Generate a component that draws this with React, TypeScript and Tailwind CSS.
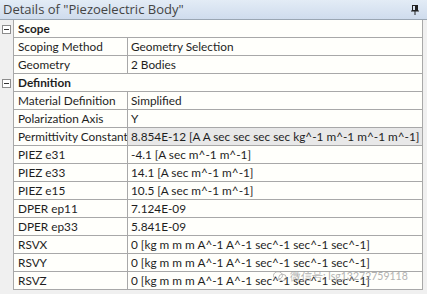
import React from 'react';

type Row =
  | { kind: 'group'; label: string }
  | { kind: 'item'; label: string; value: string; highlight?: boolean };

const rows: Row[] = [
  { kind: 'group', label: 'Scope' },
  { kind: 'item', label: 'Scoping Method', value: 'Geometry Selection' },
  { kind: 'item', label: 'Geometry', value: '2 Bodies' },
  { kind: 'group', label: 'Definition' },
  { kind: 'item', label: 'Material Definition', value: 'Simplified' },
  { kind: 'item', label: 'Polarization Axis', value: 'Y' },
  {
    kind: 'item',
    label: 'Permittivity Constant',
    value: '8.854E-12 [A A sec sec sec sec kg^-1 m^-1 m^-1 m^-1]',
    highlight: true,
  },
  { kind: 'item', label: 'PIEZ e31', value: '-4.1 [A sec m^-1 m^-1]' },
  { kind: 'item', label: 'PIEZ e33', value: '14.1 [A sec m^-1 m^-1]' },
  { kind: 'item', label: 'PIEZ e15', value: '10.5 [A sec m^-1 m^-1]' },
  { kind: 'item', label: 'DPER ep11', value: '7.124E-09' },
  { kind: 'item', label: 'DPER ep33', value: '5.841E-09' },
  { kind: 'item', label: 'RSVX', value: '0 [kg m m m A^-1 A^-1 sec^-1 sec^-1 sec^-1]' },
  { kind: 'item', label: 'RSVY', value: '0 [kg m m m A^-1 A^-1 sec^-1 sec^-1 sec^-1]' },
  { kind: 'item', label: 'RSVZ', value: '0 [kg m m m A^-1 A^-1 sec^-1 sec^-1 sec^-1]' },
];

function MinusBox() {
  return (
    <span className="flex h-[9px] w-[9px] items-center justify-center border border-[#8c8c8c] bg-white">
      <span className="h-px w-[5px] bg-[#333]" />
    </span>
  );
}

const cell = 'flex items-center whitespace-nowrap overflow-hidden border-b border-l border-[#a8a8a8]';

export default function App() {
  return (
    <div
      className="relative h-[294px] w-[427px] overflow-hidden bg-[#f0f0f0] text-[11.8px] text-[#1e1e1e]"
      style={{ fontFamily: 'Lato, "Noto Sans", Arial, sans-serif' }}
    >
      {/* title bar */}
      <div className="flex h-[20px] items-center justify-between border-b border-[#9aa6b3] bg-gradient-to-b from-[#e3ecf6] to-[#cfdced] pl-[3px] pr-[8px]">
        <span className="text-[13px] text-[#444]" style={{ fontFamily: '"Open Sans", sans-serif' }}>
          Details of "Piezoelectric Body"
        </span>
        <svg width="8" height="10" viewBox="0 0 8 10">
          <rect x="1.5" y="0.5" width="5" height="5" fill="none" stroke="#222" />
          <rect x="4" y="1" width="2" height="4" fill="#222" />
          <rect x="0" y="5.5" width="8" height="1" fill="#222" />
          <rect x="3.5" y="6" width="1" height="4" fill="#222" />
        </svg>
      </div>

      {/* property grid */}
      <div className="mr-[4px] border-r border-[#a8a8a8]">
        {rows.map((row, i) =>
          row.kind === 'group' ? (
            <div key={i} className="flex h-[18px] items-stretch">
              <div className="flex w-[13px] shrink-0 items-center justify-center bg-[#f0f0f0]">
                <MinusBox />
              </div>
              <div className={`${cell} flex-1 bg-[#fffffb] pl-[4px] font-bold`}>{row.label}</div>
            </div>
          ) : (
            <div key={i} className="flex h-[18px] items-stretch">
              <div className="w-[13px] shrink-0 bg-[#f0f0f0]" />
              <div className={`${cell} w-[114px] shrink-0 bg-[#fffffb] pl-[4px]`}>{row.label}</div>
              <div
                className={`${cell} min-w-0 flex-1 pl-[3px] ${row.highlight ? 'bg-[#e8e8e8]' : 'bg-[#fffffb]'}`}
              >
                {row.value}
              </div>
            </div>
          ),
        )}
      </div>

      {/* watermark */}
      <div className="pointer-events-none absolute left-[273px] top-[271px] flex items-center gap-[3px] text-[10.5px] leading-none text-[#a0a0a0] opacity-80">
        <svg width="14" height="11" viewBox="0 0 14 11">
          <ellipse cx="5" cy="4.5" rx="4.5" ry="3.8" fill="none" stroke="#aaa" />
          <ellipse cx="9.5" cy="6.5" rx="3.8" ry="3.2" fill="none" stroke="#aaa" />
        </svg>
        <span>微信号: lsg13272759118</span>
      </div>
    </div>
  );
}
